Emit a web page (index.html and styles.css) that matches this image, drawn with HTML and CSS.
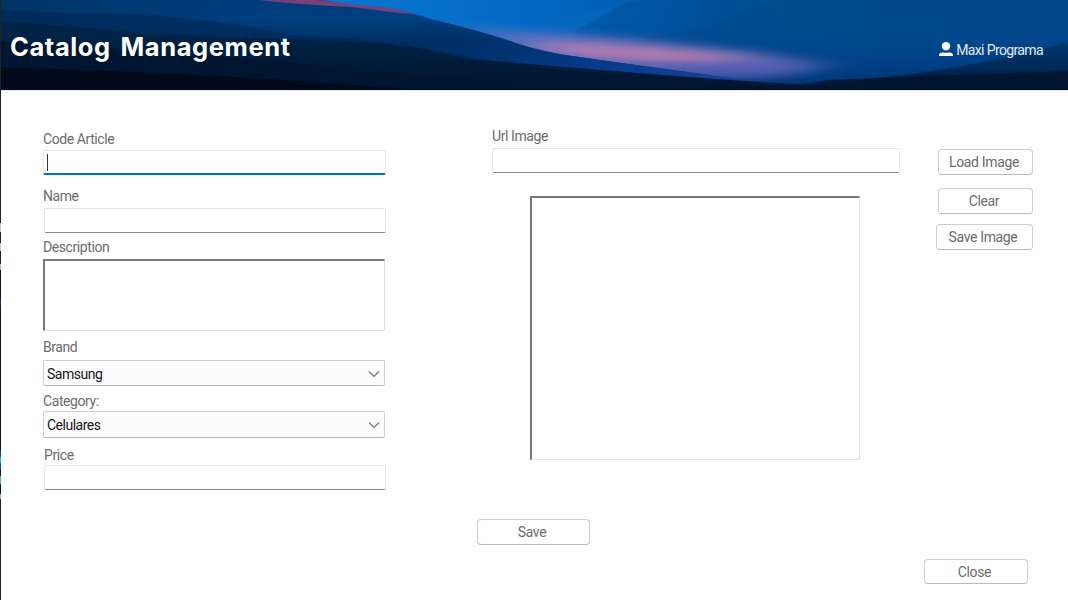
FILE: index.html
```html
<!DOCTYPE html>
<html lang="en">
<head>
<meta charset="utf-8">
<title>Catalog Management</title>
<link rel="stylesheet" href="styles.css">
</head>
<body>
<div class="window">
  <header class="banner">
    <svg class="landscape" viewBox="0 0 1068 90" preserveAspectRatio="none" aria-hidden="true">
      <defs>
        <linearGradient id="sky" x1="0" x2="1068" y1="0" y2="0" gradientUnits="userSpaceOnUse">
          <stop offset=".3" stop-color="#0878d2"/><stop offset=".5" stop-color="#0268c4"/><stop offset=".64" stop-color="#0058aa"/><stop offset="1" stop-color="#00407c"/>
        </linearGradient>
        <linearGradient id="farHill" x1="580" x2="1068" y1="0" y2="50" gradientUnits="userSpaceOnUse">
          <stop offset="0" stop-color="#005aac"/><stop offset=".3" stop-color="#004f96"/><stop offset=".65" stop-color="#00467f"/><stop offset="1" stop-color="#003f7c"/>
        </linearGradient>
        <linearGradient id="lowHaze" x1="0" x2="0" y1="20" y2="90" gradientUnits="userSpaceOnUse">
          <stop offset="0" stop-color="#004e9a" stop-opacity="0"/><stop offset=".6" stop-color="#003c86"/><stop offset="1" stop-color="#002a63"/>
        </linearGradient>
        <linearGradient id="ridge" x1="0" x2="0" y1="0" y2="70" gradientUnits="userSpaceOnUse">
          <stop offset="0" stop-color="#003c7c"/><stop offset=".25" stop-color="#00407f"/><stop offset=".6" stop-color="#002d5e"/><stop offset="1" stop-color="#003170"/>
        </linearGradient>
        <linearGradient id="ridgeSide" x1="0" x2="900" y1="0" y2="0" gradientUnits="userSpaceOnUse">
          <stop offset="0" stop-color="#003260"/><stop offset=".3" stop-color="#003c7d" stop-opacity=".4"/><stop offset=".5" stop-color="#003a82" stop-opacity=".1"/><stop offset=".66" stop-color="#083c90"/><stop offset=".8" stop-color="#1c429a"/><stop offset="1" stop-color="#003a88"/>
        </linearGradient>
        <linearGradient id="front" x1="0" x2="0" y1="35" y2="90" gradientUnits="userSpaceOnUse">
          <stop offset="0" stop-color="#002347"/><stop offset="1" stop-color="#00142e"/>
        </linearGradient>
        <linearGradient id="rightDark" x1="0" x2="0" y1="35" y2="85" gradientUnits="userSpaceOnUse">
          <stop offset="0" stop-color="#003263" stop-opacity=".5"/><stop offset="1" stop-color="#001c40"/>
        </linearGradient>
        <filter id="soft" x="-30%" y="-80%" width="160%" height="260%"><feGaussianBlur stdDeviation="24 5"/></filter>
        <filter id="edge" x="-5%" y="-30%" width="110%" height="160%"><feGaussianBlur stdDeviation="3 .7"/></filter>
      </defs>
      <rect width="1068" height="90" fill="url(#sky)"/>
      <path d="M575 30Q600 16 612 9Q628 0 645 0H1068V90H575Z" fill="url(#farHill)"/>
      <path d="M535 30Q580 10 615 9L575 31Z" fill="#0868bd" opacity=".5"/>
      <path d="M645 38Q710 28 735 17Q765 2 790 0H1068V90H645Z" fill="#004a8e" opacity=".65"/>
      <path d="M600 20H1068V90H600Z" fill="url(#lowHaze)" opacity=".7"/>
      <path d="M450 27L560 33L640 39L710 48L790 58L830 65L780 76L650 76L530 55Z" fill="#6d70be" filter="url(#soft)" opacity=".8"/>
      <path d="M520 42L600 44L665 49L730 54L770 59L700 62L640 61L560 54Z" fill="#c480b0" filter="url(#soft)" opacity=".9"/>
      <path d="M620 67L720 65L800 66L750 76L650 77Z" fill="#5055b4" filter="url(#soft)" opacity=".65"/>
      <path d="M780 88Q980 72 1090 35V90H780Z" fill="url(#rightDark)" filter="url(#edge)"/>
      <path d="M0 0H320L356 6Q400 8 430 19Q485 32 515 43Q540 51 565 55Q620 63 665 69Q740 79 800 90H0Z" fill="url(#ridge)"/>
      <path d="M0 0H320L356 6Q400 8 430 19Q485 32 515 43Q540 51 565 55Q620 63 665 69Q740 79 800 90H0Z" fill="url(#ridgeSide)" opacity=".85"/>
      <path d="M258 0H318L356 5Q395 7 416 15Q382 11 350 7Q290 4 258 0Z" fill="#75427b" filter="url(#edge)"/>
      <path d="M-20 9Q70 14 140 14Q220 20 290 35Q360 38 420 47L510 65H-20Z" fill="#002852" opacity=".6" filter="url(#edge)"/>
      <path d="M0 21Q70 26 140 33Q250 39 356 41Q410 45 470 59Q550 66 650 74Q760 83 900 90H0Z" fill="url(#front)"/>
      <path d="M0 41Q100 48 200 55Q290 62 356 69Q460 79 560 88H0Z" fill="#00152f"/>
      <path d="M0 67Q150 72 250 78Q320 82 420 90H0Z" fill="#000a1b"/>
      <path d="M830 80Q960 74 1090 71V90H712V87Q780 89 830 80Z" fill="#00132e" filter="url(#edge)" opacity=".9"/>
      <rect y="89" width="1068" height="1" fill="#000d27"/>
    </svg>
    <h1 class="title">Catalog Management</h1>
    <div class="user">
      <svg class="avatar" viewBox="0 0 14 15" aria-hidden="true"><path d="M7 0C4.3 0 2.9 1.7 2.9 4C2.9 6.6 4.5 8.4 7 8.4S11.2 6.6 11.2 4C11.2 1.7 9.9 0 7 0ZM3.8 10.2C1.7 10.6 0 11.6 0 13V14H14V13C14 11.6 12.3 10.6 10.2 10.2Q7 11.2 3.8 10.2Z" fill="#fff"/></svg>
      <span class="user-name">Maxi Programa</span>
    </div>
  </header>

  <main class="content">
    <section class="details">
      <label class="label">Code Article</label>
      <div class="input focused"><span class="caret"></span></div>
      <label class="label name-label">Name</label>
      <div class="input name-input"></div>
      <label class="label description-label">Description</label>
      <div class="sunken description"></div>
      <label class="label brand-label">Brand</label>
      <div class="select brand"><span>Samsung</span><svg class="chevron" viewBox="0 0 12 8"><path d="M1 1.5L6 6.5L11 1.5"/></svg></div>
      <label class="label category-label">Category:</label>
      <div class="select category"><span>Celulares</span><svg class="chevron" viewBox="0 0 12 8"><path d="M1 1.5L6 6.5L11 1.5"/></svg></div>
      <label class="label price-label">Price</label>
      <div class="input price-input"></div>
    </section>

    <section class="image-panel">
      <label class="label url-label">Url Image</label>
      <div class="input url-input"></div>
      <div class="sunken picture"></div>
    </section>

    <div class="image-actions">
      <button class="button">Load Image</button>
      <button class="button clear">Clear</button>
      <button class="button save-image">Save Image</button>
    </div>
  </main>

  <footer class="footer">
    <button class="button save">Save</button>
    <button class="button close">Close</button>
  </footer>
</div>
</body>
</html>
```
FILE: styles.css
```css
* { box-sizing: border-box; }
body {
  margin: 0;
  width: 1068px;
  height: 600px;
  overflow: hidden;
  background: #fefefe;
  color: #6c6c6c;
  font: 14px/16px Roboto, "Liberation Sans", sans-serif;
  letter-spacing: -.42px;
}
.window {
  display: flex;
  flex-direction: column;
  height: 600px;
  padding-left: 1px;
  background: linear-gradient(90deg, #fefefe, #fefefe) 1px 0 / 100% 100% no-repeat,
    linear-gradient(#202224 0 223px, #b9d3d3 223px 232px, #202224 232px 243px, #b9d3d3 243px 251px, #202224 251px 264px, #8dbbd8 264px 270px, #17171b 270px 300px, #262080 300px 305px, #17171b 305px 450px, #174887 450px 457px, #27b9b6 457px 463px, #174887 463px 470px, #17171b 470px 476px, #4ac293 476px 484px, #17171b 484px 494px, #81b4dc 494px 499px, #202224 499px);
}
.banner {
  display: flex;
  flex: none;
  justify-content: space-between;
  position: relative;
  height: 91px;
  border-bottom: 1px solid #e9e7ed;
}
.landscape { position: absolute; inset: 0; width: 100%; height: 90px; }
.title {
  position: relative;
  margin: 31px 0 0 9px;
  color: #fff;
  font: 700 25.5px/32px Inter, "Liberation Sans", sans-serif;
  letter-spacing: .6px;
  word-spacing: 3px;
  white-space: nowrap;
}
.user {
  display: flex;
  position: relative;
  gap: 3px;
  margin: 42px 25px 0 0;
  color: #e8e8e8;
}
.user-name { letter-spacing: -.62px; }
.avatar { width: 14px; height: 15px; }
.content { display: flex; flex: none; height: 409px; }
.details { display: flex; flex-direction: column; width: 343px; margin: 40px 0 0 42px; }
.label { flex: none; display: block; height: 16px; white-space: nowrap; }
.input {
  flex: none;
  height: 25px;
  margin: 3px 0 0 1px;
  border: 1px solid #e7e7e7;
  border-bottom-color: #8c8c8c;
  border-radius: 2px;
  background: #fff;
}
.focused { margin-left: 0; border-bottom: 2px solid #0869bf; padding: 3px 0 0 3px; }
.caret { display: block; width: 1px; height: 17px; background: #333; }
.name-label { margin: 13px 0 0; }
.name-input { margin-top: 4px; }
.description-label { margin: 6px 0 0; }
.sunken {
  flex: none;
  border: 2px solid #787878;
  border-right: 1px solid #dedede;
  border-bottom: 1px solid #dedede;
  background: #fff;
}
.description { width: 342px; height: 72px; margin-top: 4px; }
.brand-label { margin: 8px 0 0; }
.select {
  display: flex;
  flex: none;
  align-items: center;
  justify-content: space-between;
  width: 342px;
  height: 26px;
  padding: 1px 4px 0 3px;
  border: 1px solid #cfcfcf;
  border-bottom-color: #b8b8b8;
  border-radius: 2px;
  background: #fcfcfc;
  color: #171717;
  letter-spacing: -.5px;
}
.brand { margin-top: 5px; }
.category { height: 27px; margin-top: 2px; }
.chevron { width: 12px; height: 8px; fill: none; stroke: #747474; stroke-width: 1.2; }
.category-label { margin-top: 7px; }
.price-label { margin: 9px 0 0 1px; }
.price-input { margin-top: 2px; }
.image-panel { display: flex; flex-direction: column; width: 408px; margin: 37px 0 0 106px; }
.url-input { margin: 4px 0 0; }
.picture { width: 330px; height: 264px; margin: 23px 0 0 38px; }
.image-actions {
  display: flex;
  flex-direction: column;
  align-items: flex-end;
  width: 97px;
  margin: 58px 0 0 36px;
}
.button {
  width: 95px;
  height: 26px;
  padding: 0 3px 0 0;
  border: 1px solid #cecece;
  border-bottom-color: #b9b9b9;
  border-radius: 4px;
  background: #fefefe;
  color: inherit;
  font: inherit;
  letter-spacing: -.35px;
}
.clear { margin-top: 13px; }
.save-image { width: 97px; margin-top: 10px; }
.footer { display: flex; justify-content: space-between; padding: 19px 40px 0 476px; }
.save { width: 113px; }
.close { width: 104px; height: 25px; margin-top: 40px; }
```
